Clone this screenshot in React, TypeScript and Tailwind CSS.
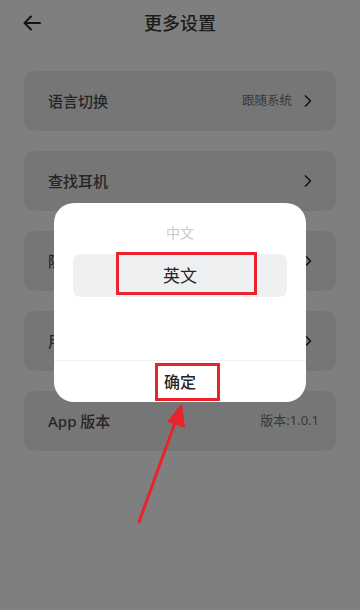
import { ChevronRight } from 'lucide-react'

const rows = [
  { label: '语言切换', value: '跟随系统', chevron: true },
  { label: '查找耳机', value: '', chevron: true },
  { label: '隐私政策', value: '', chevron: true },
  { label: '用户协议', value: '', chevron: true },
  { label: 'App 版本', value: '版本:1.0.1', chevron: false },
]

export default function App() {
  return (
    <div
      className="relative w-[360px] h-[610px] overflow-hidden bg-[#7f7f7f]"
      style={{ fontFamily: '"Noto Sans", "Noto Sans CJK SC", sans-serif' }}
    >
      {/* ── Header ─────────────────────────── */}
      <div className="relative h-[46px] flex items-center justify-center">
        <button className="absolute left-[22px] top-[13px] text-[#141414]">
          <svg width="20" height="20" viewBox="0 0 20 20" fill="none" stroke="currentColor" strokeWidth="2" strokeLinecap="round" strokeLinejoin="round">
            <path d="M18 10H3M9 3.5 2.5 10 9 16.5" />
          </svg>
        </button>
        <h1 className="text-[18px] font-medium text-[#1c1c1c] leading-none">更多设置</h1>
      </div>

      {/* ── Settings list ─────────────────── */}
      <div className="flex flex-col gap-5 px-6 pt-[25px]">
        {rows.map((r) => (
          <div
            key={r.label}
            className="h-[60px] rounded-[10px] bg-[#767676] flex items-center justify-between pl-6 pr-[17px]"
          >
            <span className="text-[15px] font-medium text-[#262626]">{r.label}</span>
            <span className="flex items-center gap-[6px]">
              {r.value && (
                <span className={r.chevron ? 'text-[12.5px] text-[#383838]' : 'text-[13px] text-[#383838]'}>
                  {r.value}
                </span>
              )}
              {r.chevron && <ChevronRight size={20} strokeWidth={2} className="text-[#141414] mr-[1px]" />}
            </span>
          </div>
        ))}
      </div>

      {/* ── Dialog ───────────────────────── */}
      <div className="absolute left-[54px] top-[203px] w-[252px] h-[199px] bg-white rounded-[20px] flex flex-col overflow-hidden">
        <div className="h-[157px] flex flex-col items-center px-[19px]">
          <div className="h-[51px] flex items-center justify-center pt-[8px] text-[14px] text-[#c9c9c9]">中文</div>
          <div className="w-full h-[43px] rounded-[8px] bg-[#eeeff1] flex items-center justify-center text-[17px] text-[#262626]">
            英文
          </div>
        </div>
        <div className="h-px bg-[#f0f0f0]" />
        <div className="flex-1 flex items-center justify-center text-[16px] font-medium text-[#262626]">确定</div>

        {/* annotation boxes */}
        <div className="absolute left-[62px] top-[49px] w-[141px] h-[43px] border-[3px] border-[#e8232b]" />
        <div className="absolute left-[101px] top-[160px] w-[65px] h-[38px] border-[3px] border-[#e8232b]" />
      </div>

      {/* annotation arrow */}
      <svg className="absolute left-0 top-0 pointer-events-none" width="360" height="610" viewBox="0 0 360 610">
        <line x1="139" y1="522" x2="176" y2="420" stroke="#e8232b" strokeWidth="3" strokeLinecap="round" />
        <polygon points="182,403 185,428 167,422" fill="#e8232b" />
      </svg>
    </div>
  )
}
